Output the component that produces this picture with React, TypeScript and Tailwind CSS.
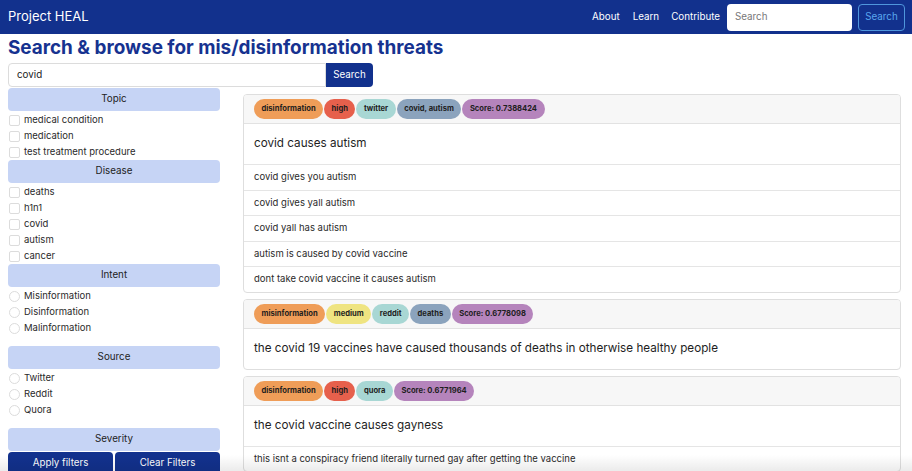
import React from "react";

const font = { fontFamily: "Inter, 'Noto Sans', 'Liberation Sans', sans-serif" };

const badgeColors: Record<string, string> = {
  orange: "bg-[#ef9d58]",
  red: "bg-[#e6604c]",
  teal: "bg-[#a8d7d4]",
  slate: "bg-[#8ba3bd]",
  purple: "bg-[#b584bc]",
  yellow: "bg-[#efe481]",
};

type Badge = { label: string; color: string };

function Badges({ items }: { items: Badge[] }) {
  return (
    <div className="flex items-center gap-[1px]">
      {items.map((b, i) => (
        <span
          key={i}
          className={`${badgeColors[b.color]} h-[20px] px-[7.5px] rounded-full flex items-center text-[7.6px] font-bold text-[#1e1e1e]`}
        >
          {b.label}
        </span>
      ))}
    </div>
  );
}

function Card({ badges, title, rows }: { badges: Badge[]; title: string; rows: string[] }) {
  return (
    <div className="border border-[#dedede] rounded-[4px] bg-white overflow-hidden">
      <div className="h-[29px] bg-[#f7f7f7] border-b border-[#e2e2e2] px-[10px] flex items-center">
        <Badges items={badges} />
      </div>
      <div className="h-[40px] px-[10px] flex items-center text-[11.7px] text-[#1e1e1e]">{title}</div>
      {rows.map((r, i) => (
        <div key={i} className="h-[25.5px] border-t border-[#e5e5e5] px-[10px] flex items-center text-[9.5px] text-[#2a2a2a]">
          {r}
        </div>
      ))}
    </div>
  );
}

function Header({ label }: { label: string }) {
  return (
    <div className="h-[23px] bg-[#c6d4f5] rounded-[4px] flex items-center justify-center text-[9.8px] text-[#222]">
      {label}
    </div>
  );
}

function Check({ label, radio }: { label: string; radio?: boolean }) {
  return (
    <div className="h-[16px] flex items-center text-[9.5px] text-[#2a2a2a]">
      <span
        className={`w-[11px] h-[11px] ml-[1px] mr-[4px] border border-[#dcdcdc] bg-white ${radio ? "rounded-full" : "rounded-[2px]"}`}
      />
      {label}
    </div>
  );
}

export default function App() {
  return (
    <div className="w-[912px] h-[471px] overflow-hidden bg-white relative" style={font}>
      <nav className="h-[34px] bg-[#12318d] flex items-center pl-[8px] pr-[7px]">
        <span className="text-white text-[13px]">Project HEAL</span>
        <div className="ml-auto flex items-center">
          <span className="text-white text-[9.8px] mr-[13px]">About</span>
          <span className="text-white text-[9.8px] mr-[12px]">Learn</span>
          <span className="text-white text-[9.8px] mr-[7px]">Contribute</span>
          <div className="w-[125px] h-[27px] bg-white rounded-[4px] flex items-center px-[8px] text-[9.8px] text-[#777]">
            Search
          </div>
          <div className="ml-[6px] w-[47px] h-[27px] border border-[#4f96dc] rounded-[4px] flex items-center justify-center text-[9.8px] text-[#5aa8ee]">
            Search
          </div>
        </div>
      </nav>
      <div className="px-[8px]">
        <h1 className="text-[18.9px] font-bold text-[#163290] leading-[26px] mt-[1px]">
          Search &amp; browse for mis/disinformation threats
        </h1>
        <div className="flex mt-[2px] h-[24px]">
          <div className="w-[318px] border border-[#dcdcdc] rounded-l-[4px] flex items-center px-[8px] text-[9.8px] text-[#222]">
            covid
          </div>
          <div className="w-[47px] bg-[#12318d] rounded-r-[4px] flex items-center justify-center text-[9.8px] text-white">
            Search
          </div>
        </div>
        <div className="flex mt-[1px]">
          <aside className="w-[212px] flex flex-col">
            <Header label="Topic" />
            <div className="pt-[1px]">
              <Check label="medical condition" />
              <Check label="medication" />
              <Check label="test treatment procedure" />
            </div>
            <Header label="Disease" />
            <div className="pt-[1px]">
              <Check label="deaths" />
              <Check label="h1n1" />
              <Check label="covid" />
              <Check label="autism" />
              <Check label="cancer" />
            </div>
            <Header label="Intent" />
            <div className="pt-[1px] pb-[10px]">
              <Check radio label="Misinformation" />
              <Check radio label="Disinformation" />
              <Check radio label="Malinformation" />
            </div>
            <Header label="Source" />
            <div className="pt-[1px] pb-[10px]">
              <Check radio label="Twitter" />
              <Check radio label="Reddit" />
              <Check radio label="Quora" />
            </div>
            <Header label="Severity" />
            <div className="flex gap-[2px] mt-[1px]">
              <div className="flex-1 h-[22px] bg-[#12318d] rounded-t-[4px] flex items-center justify-center text-[9.8px] text-white">
                Apply filters
              </div>
              <div className="flex-1 h-[22px] bg-[#12318d] rounded-t-[4px] flex items-center justify-center text-[9.8px] text-white">
                Clear Filters
              </div>
            </div>
          </aside>
          <main className="ml-[23px] w-[658px] mt-[6px] flex flex-col gap-[6px]">
            <Card
              badges={[
                { label: "disinformation", color: "orange" },
                { label: "high", color: "red" },
                { label: "twitter", color: "teal" },
                { label: "covid, autism", color: "slate" },
                { label: "Score: 0.7388424", color: "purple" },
              ]}
              title="covid causes autism"
              rows={[
                "covid gives you autism",
                "covid gives yall autism",
                "covid yall has autism",
                "autism is caused by covid vaccine",
                "dont take covid vaccine it causes autism",
              ]}
            />
            <Card
              badges={[
                { label: "misinformation", color: "orange" },
                { label: "medium", color: "yellow" },
                { label: "reddit", color: "teal" },
                { label: "deaths", color: "slate" },
                { label: "Score: 0.6778098", color: "purple" },
              ]}
              title="the covid 19 vaccines have caused thousands of deaths in otherwise healthy people"
              rows={[]}
            />
            <Card
              badges={[
                { label: "disinformation", color: "orange" },
                { label: "high", color: "red" },
                { label: "quora", color: "teal" },
                { label: "Score: 0.6771964", color: "purple" },
              ]}
              title="the covid vaccine causes gayness"
              rows={["this isnt a conspiracy friend literally turned gay after getting the vaccine"]}
            />
          </main>
        </div>
      </div>
      <div className="absolute left-0 right-0 bottom-0 h-[16px] bg-gradient-to-b from-transparent to-[#00000014] pointer-events-none" />
    </div>
  );
}
